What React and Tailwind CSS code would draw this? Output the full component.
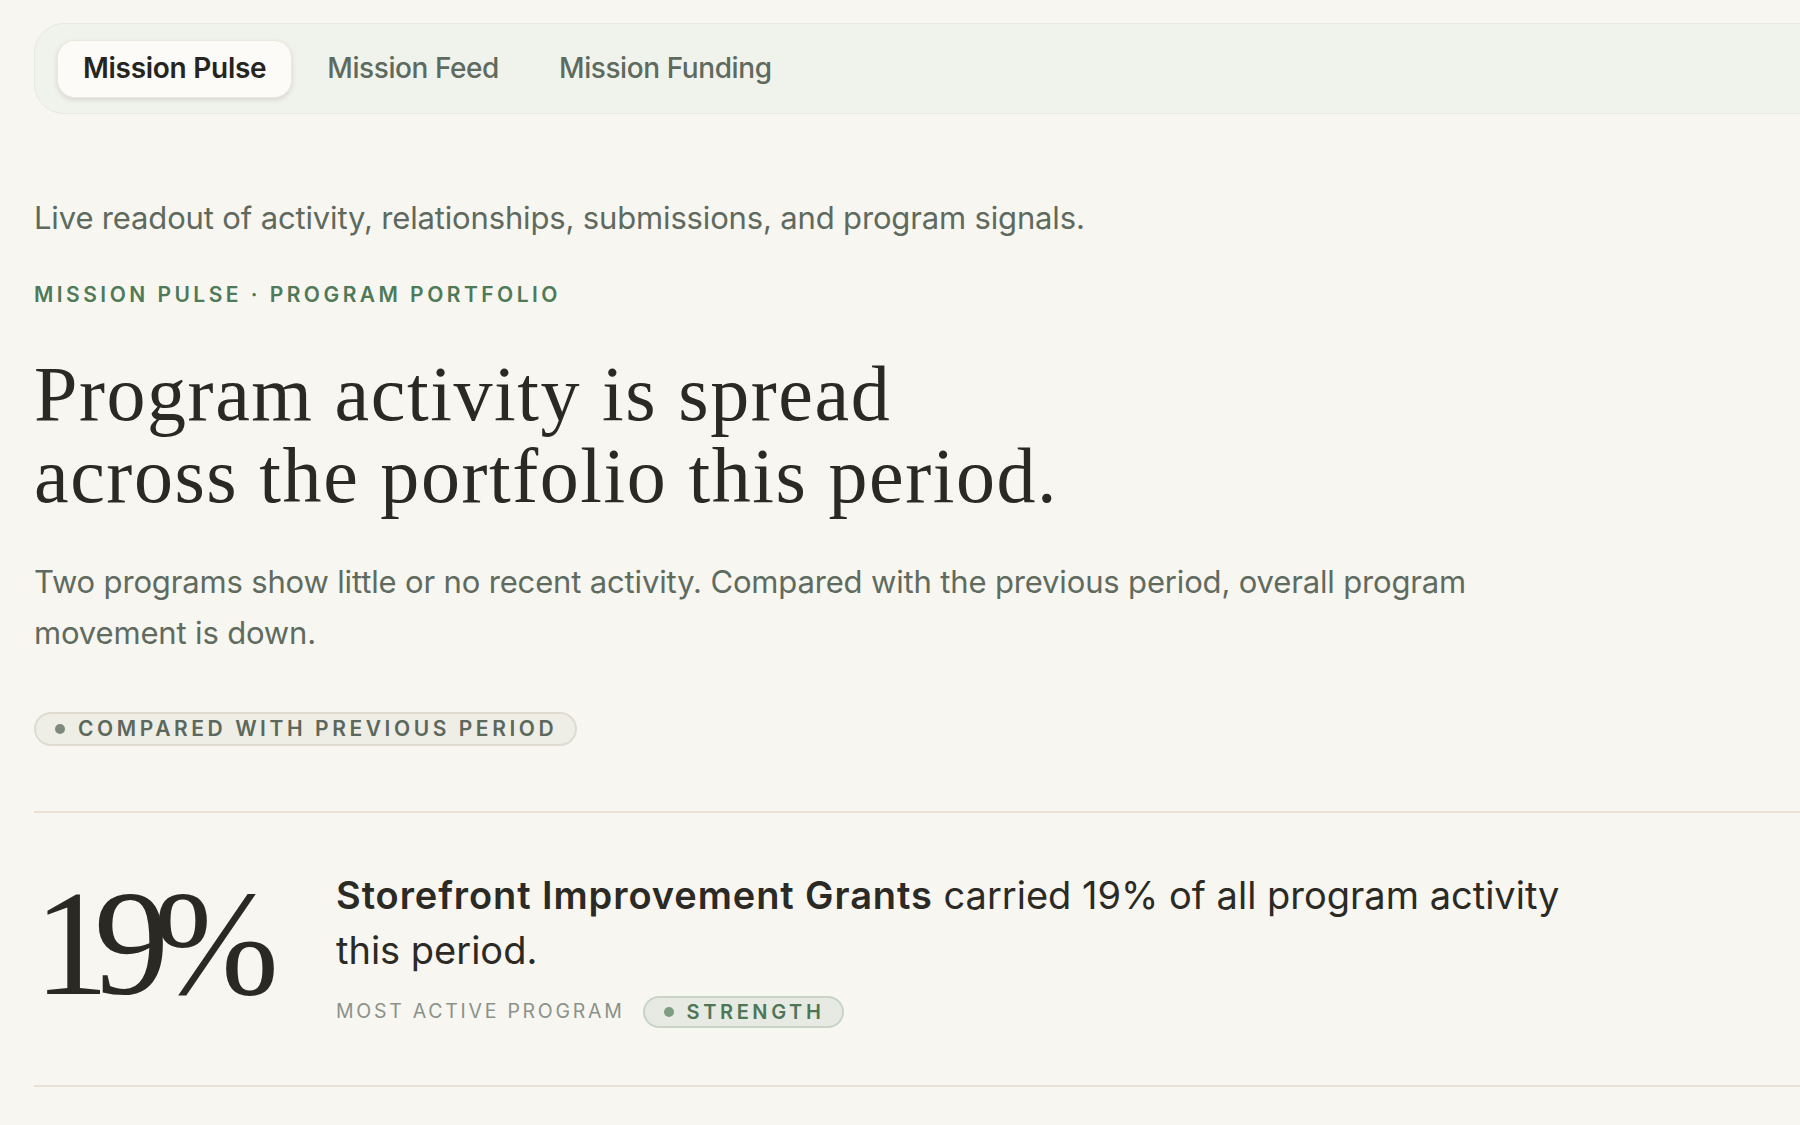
import { useState } from "react";

const tabs = ["Mission Pulse", "Mission Feed", "Mission Funding"];

function Pill({ children, tone = "neutral" }) {
  const styles =
    tone === "strength"
      ? "bg-[#e6eae2] border-[#c9d3c6] text-[#4d7657]"
      : "bg-[#efeee6] border-[#e0dbd0] text-[#5c685c]";
  const dot = tone === "strength" ? "bg-[#7f9c85]" : "bg-[#7e897d]";
  return (
    <span
      className={`inline-flex items-center gap-[13px] rounded-full border-2 pl-[19px] pr-[18px] font-semibold uppercase ${styles}`}
    >
      <span className={`h-[10px] w-[10px] rounded-full ${dot}`}></span>
      {children}
    </span>
  );
}

export default function App() {
  const [active, setActive] = useState("Mission Pulse");

  return (
    <div
      className="min-h-screen overflow-hidden bg-[#f8f6f0] text-[#2b2a25]"
      style={{ fontFamily: "Inter, 'Liberation Sans', sans-serif" }}
    >
      <div className="w-[1900px] pl-[34px] pt-[23px]">
        {/* Tabs */}
        <div className="flex h-[91px] items-center gap-[10px] rounded-l-[30px] border border-[#e7eae1] bg-[#f0f3ec] pl-[22px]">
          {tabs.map((tab) => (
            <button
              key={tab}
              onClick={() => setActive(tab)}
              className={
                active === tab
                  ? "h-[58px] rounded-[18px] border border-[#ece8df] bg-[#fcfbf7] px-[25px] pb-[1px] text-[28px] font-semibold tracking-[-0.01em] text-[#25241f] shadow-[0_2px_5px_rgba(60,50,30,0.14)]"
                  : "h-[58px] rounded-[18px] px-[25px] pb-[1px] text-[28px] font-medium tracking-[-0.015em] text-[#5e6a5e]"
              }
            >
              {tab}
            </button>
          ))}
        </div>

        {/* Intro */}
        <p className="mt-[86px] text-[31px] leading-[36px] tracking-[-0.005em] text-[#5e6a5e]">
          Live readout of activity, relationships, submissions, and program signals.
        </p>

        <div className="mt-[45px] text-[21px] font-semibold uppercase leading-[28px] tracking-[0.165em] text-[#4e7a58]">
          Mission Pulse · Program Portfolio
        </div>

        <h1
          className="mt-[44px] text-[78px] leading-[82px] tracking-[0.02em] text-[#2a2924]"
          style={{ fontFamily: "'Liberation Serif', serif" }}
        >
          Program activity is spread
          <br />
          across the portfolio this period.
        </h1>

        <p className="mt-[39px] max-w-[1470px] text-[31px] leading-[51px] tracking-[-0.005em] text-[#5f6b5f]">
          Two programs show little or no recent activity. Compared with the previous period, overall program
          movement is down.
        </p>

        <div className="mt-[54px] text-[21px] leading-[30px] tracking-[0.17em]">
          <Pill>Compared with previous period</Pill>
        </div>

        {/* Highlight row */}
        <div className="mt-[65px] border-y-2 border-[#e7e1d6]">
          <div className="flex pt-[55px] pb-[57px]">
            <div
              className="w-[302px] shrink-0 text-[150px] leading-[150px] tracking-[-0.1em] text-[#2a2924]"
              style={{ fontFamily: "'Liberation Serif', serif" }}
            >
              19%
            </div>
            <div>
              <p className="max-w-[1280px] text-[38px] leading-[55px] text-[#2b2a25]">
                <span className="font-semibold tracking-[0.024em]">Storefront Improvement Grants</span> carried 19% of
                all program activity this period.
              </p>
              <div className="mt-[18px] flex items-center gap-[18px]">
                <span className="text-[19.5px] uppercase tracking-[0.14em] text-[#8b928a]">Most active program</span>
                <span className="text-[20px] leading-[28px] tracking-[0.18em]">
                  <Pill tone="strength">Strength</Pill>
                </span>
              </div>
            </div>
          </div>
        </div>
      </div>
    </div>
  );
}
